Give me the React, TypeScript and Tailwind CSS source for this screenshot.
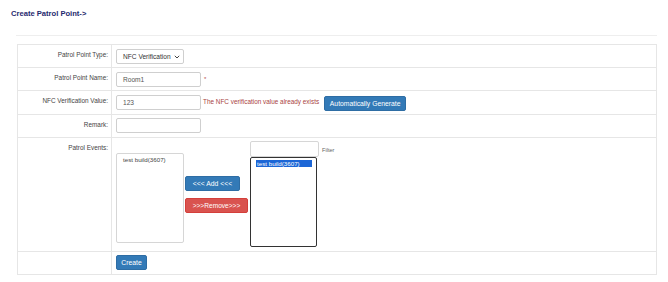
import React from "react";

const label = "w-[94px] shrink-0 border-r border-[#e6e6e6] pr-[3px] pt-[6px] text-right text-[6.4px] leading-[8px] text-[#444]";
const input = "h-[15px] w-[85px] rounded-[2px] border border-[#cfcfcf] bg-white pl-[6px] text-[6.6px] leading-[13px] text-[#555]";

export default function App() {
  return (
    <div className="min-h-[282px] w-full bg-white font-['Liberation_Sans',Arial,sans-serif]">
      <h1 className="pl-[11px] pt-[9px] text-[7.6px] font-bold leading-[10px] text-[#1f2a6e]">Create Patrol Point-&gt;</h1>
      <div className="pl-[16px] pr-[11px]">
        <div className="mt-[16px] border-t border-[#eeeeee]" />
        <div className="ml-[1px] mt-[8px] border border-[#e6e6e6]">
          <div className="flex h-[23px] border-b border-[#e6e6e6]">
            <div className={label}>Patrol Point Type:</div>
            <div className="flex items-start pl-[4px] pt-[4px]">
              <div className="flex h-[15px] w-[68px] items-center justify-between rounded-[2px] border border-[#cfcfcf] bg-white pl-[6px] pr-[3px] text-[6.6px] text-[#333]">
                <span>NFC Verification</span>
                <svg width="6" height="4" viewBox="0 0 6 4" fill="none" stroke="#444" strokeWidth="1">
                  <path d="M0.8 0.8 L3 3 L5.2 0.8" />
                </svg>
              </div>
            </div>
          </div>
          <div className="flex h-[23px] border-b border-[#e6e6e6]">
            <div className={label}>Patrol Point Name:</div>
            <div className="flex items-start pl-[4px] pt-[4px]">
              <div className={input}>Room1</div>
              <span className="ml-[3px] mt-[4px] text-[6px] leading-[6px] text-[#b84a4a]">*</span>
            </div>
          </div>
          <div className="flex h-[24px] border-b border-[#e6e6e6]">
            <div className={label}>NFC Verification Value:</div>
            <div className="flex items-start pl-[4px] pt-[4px]">
              <div className={input}>123</div>
              <span className="ml-[2px] mt-[3px] text-[6.4px] leading-[8px] text-[#a94442]">The NFC verification value already exists</span>
              <button className="ml-[5px] mt-[1px] h-[15px] w-[82px] rounded-[2px] border border-[#2e6da4] bg-[#337ab7] text-[6.8px] leading-[13px] text-white">Automatically Generate</button>
            </div>
          </div>
          <div className="flex h-[23px] border-b border-[#e6e6e6]">
            <div className={label}>Remark:</div>
            <div className="flex items-start pl-[4px] pt-[3px]">
              <div className={input}></div>
            </div>
          </div>
          <div className="flex h-[114px] border-b border-[#e6e6e6]">
            <div className={label}>Patrol Events:</div>
            <div className="flex items-start pl-[4px] pt-[3px]">
              <div className="mt-[12px] h-[90px] w-[68px] rounded-[2px] border border-[#d6d6d6] bg-white pl-[6px] pt-[2px] text-[6.2px] leading-[8px] text-[#444]">test build(3607)</div>
              <div className="ml-[1px] mt-[35px] flex flex-col items-start gap-[7px]">
                <button className="h-[15px] w-[55px] rounded-[2px] border border-[#2e6da4] bg-[#337ab7] text-[6.8px] leading-[13px] text-white">&lt;&lt;&lt; Add &lt;&lt;&lt;</button>
                <button className="h-[15px] w-[63px] rounded-[2px] border border-[#d43f3a] bg-[#d9534f] text-[6.6px] leading-[13px] text-white">&gt;&gt;&gt;Remove&gt;&gt;&gt;</button>
              </div>
              <div className="ml-[2px] flex flex-col">
                <div className="flex items-center">
                  <div className="h-[16px] w-[69px] rounded-[2px] border border-[#d6d6d6] bg-white" />
                  <span className="ml-[3px] mt-[2px] text-[5.6px] text-[#666]">Filter</span>
                </div>
                <div className="h-[90px] w-[67px] rounded-[2px] border-[1.5px] border-[#333] bg-white pl-[5px] pt-[2px]">
                  <div className="h-[7px] w-[56px] bg-[#1c66d6] pl-[1px] text-[6.2px] leading-[7px] text-white">test build(3607)</div>
                </div>
              </div>
            </div>
          </div>
          <div className="flex h-[22px]">
            <div className={label}></div>
            <div className="flex items-start pl-[4px] pt-[3px]">
              <button className="h-[15px] w-[31px] rounded-[2px] border border-[#2e6da4] bg-[#337ab7] text-[6.8px] leading-[13px] text-white">Create</button>
            </div>
          </div>
        </div>
      </div>
    </div>
  );
}
